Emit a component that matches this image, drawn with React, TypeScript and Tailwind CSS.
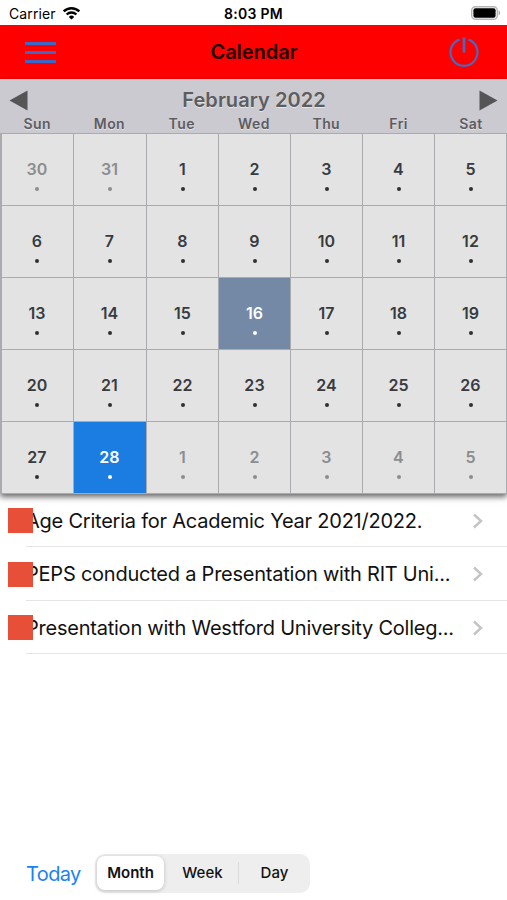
import clsx from 'clsx'

const weekdays = ['Sun', 'Mon', 'Tue', 'Wed', 'Thu', 'Fri', 'Sat']

// the visible month starts on Sunday, January 30
const days = [
  30, 31, 1, 2, 3, 4, 5,
  6, 7, 8, 9, 10, 11, 12,
  13, 14, 15, 16, 17, 18, 19,
  20, 21, 22, 23, 24, 25, 26,
  27, 28, 1, 2, 3, 4, 5,
]

const TODAY_INDEX = 17
const SELECTED_INDEX = 29

const events = [
  'Age Criteria for Academic Year 2021/2022.',
  'PEPS conducted a Presentation with RIT Uni...',
  'Presentation with Westford University Colleg...',
]

function StatusBar() {
  return (
    <div className="grid h-[25px] grid-cols-3 items-center bg-white pt-[3px] text-black">
      <div className="flex items-center gap-[6px] pl-[9px]">
        <span className="text-[14px] leading-none tracking-[0.1px]">Carrier</span>
        <svg width="19" height="14" viewBox="0 0 18 14" className="-mt-[3px]">
          <path d="M1.2 5.4a11.2 11.2 0 0 1 15.6 0" fill="none" stroke="#000" strokeWidth="2.5" />
          <path d="M4.1 8.5a7 7 0 0 1 9.8 0" fill="none" stroke="#000" strokeWidth="2.3" />
          <path d="M9 13.6 6.3 10.9a3.9 3.9 0 0 1 5.4 0z" fill="#000" />
        </svg>
      </div>
      <div className="text-center text-[14px] leading-none font-semibold tracking-[0.3px]">8:03 PM</div>
      <div className="flex justify-end pr-[6px]">
        <svg width="30" height="14" viewBox="0 0 30 14" className="-mt-[3px]">
          <rect x="0.7" y="0.7" width="25.6" height="12.6" rx="3.8" fill="#fff" stroke="#b5b5b5" strokeWidth="1.4" />
          <rect x="2.4" y="2.2" width="22.2" height="9.6" rx="2" fill="#000" />
          <path d="M27.6 4.6c2 .5 2 4.3 0 4.8z" fill="#aaa" />
        </svg>
      </div>
    </div>
  )
}

function NavBar() {
  return (
    <div className="flex h-[54px] items-center justify-between bg-[#ff0000] pr-[27px] pl-[25px]">
      <button className="flex w-[31px] flex-col gap-[6px]">
        <span className="h-[3px] bg-[#3b68c9]" />
        <span className="h-[3px] bg-[#3b68c9]" />
        <span className="h-[3px] bg-[#3b68c9]" />
      </button>
      <h1 className="pl-[4px] text-[20px] font-semibold tracking-[-0.05px] text-[#1a0000]">Calendar</h1>
      <button>
        <svg width="32" height="32" viewBox="0 0 32 32" fill="none" stroke="#4a68bd" strokeWidth="2.2" className="block">
          <path d="M11.4 3.6a13.500 13.500 0 1 0 9.200 0" />
          <path d="M16 1.500v15" strokeWidth="2.800" />
        </svg>
      </button>
    </div>
  )
}

function MonthHeader() {
  return (
    <div className="h-[54px] bg-[#cbcad0] text-[#5d5c61] [text-shadow:0_1px_0_#fff8]">
      <div className="flex h-[35px] items-center justify-between px-[9px] pt-[7px]">
        <svg width="19" height="21" viewBox="0 0 19 21"><path d="M.5 10.500 18.500.5v20z" fill="#555457" /></svg>
        <span className="pl-px text-[20px] leading-none font-semibold tracking-[0.05px]">February 2022</span>
        <svg width="19" height="21" viewBox="0 0 19 21"><path d="M18.500 10.500.5.5v20z" fill="#555457" /></svg>
      </div>
      <div className="grid grid-cols-7 pl-[1px] text-center text-[14px] leading-[19px] font-semibold tracking-[0.4px]">
        {weekdays.map((day) => (
          <span key={day}>{day}</span>
        ))}
      </div>
    </div>
  )
}

function DayCell({ day, index }: { day: number; index: number }) {
  const outside = index < 2 || index > 29
  const today = index === TODAY_INDEX
  const selected = index === SELECTED_INDEX

  return (
    <div
      className={clsx(
        'flex flex-col items-center border-t border-l border-[#a9abaf] pt-[25px]',
        index % 7 < 2 && 'pr-px',
        outside && 'bg-[#e3e3e3] text-[#8b8d8f]',
        today && 'bg-[#7389a6] text-white',
        selected && 'border-[#1a6cc4] bg-[#1b7de2] text-white',
        !outside && !today && !selected && 'bg-[#e3e3e3] text-[#373b40]',
      )}
    >
      <span className="text-[16px] leading-[20px] font-semibold tracking-[0.1px]">{day}</span>
      <span
        className={clsx(
          'mt-[8px] h-1 w-1 rounded-full',
          today || selected ? 'bg-white' : outside ? 'bg-[#8b8d8f]' : 'bg-[#2c2f33]',
        )}
      />
    </div>
  )
}

function EventRow({ title }: { title: string }) {
  return (
    <div className="relative flex h-[53.7px] pl-[26px]">
      <div className="flex flex-1 items-center justify-between border-b border-[#e5e5e5] pt-[2px] pr-[24px]">
        <span className="text-[20px] leading-none tracking-[-0.23px] whitespace-nowrap text-[#111]">{title}</span>
        <svg width="11" height="16" viewBox="0 0 11 16" fill="none" stroke="#c4c4c6" strokeWidth="2.4">
          <path d="m2 1.500 7 6.500-7 6.500" />
        </svg>
      </div>
      {/* the category marker overlaps the start of the title */}
      <span className="absolute top-[14.5px] left-[8px] h-[25px] w-[25px] bg-[#e84f38]" />
    </div>
  )
}

function Toolbar() {
  return (
    <div className="flex h-[54px] items-center pl-[26px]">
      <button className="w-[69px] pt-px text-left text-[20px] leading-none tracking-[-0.6px] text-[#1a82f7]">Today</button>
      <div className="flex h-[39px] w-[215px] items-center rounded-[10px] bg-[#eeeeef] p-[2px] text-[15px] font-medium text-[#111]">
        <span className="flex h-[34px] w-[67px] items-center justify-center rounded-[8px] bg-white pt-px font-semibold shadow-[0_1px_4px_#0003]">
          Month
        </span>
        <span className="flex-1 pt-px pl-[3px] text-center tracking-[0.1px]">Week</span>
        <span className="h-[22px] w-px bg-[#dcdcde]" />
        <span className="w-[69px] pt-px pl-[2px] text-center tracking-[0.1px]">Day</span>
      </div>
    </div>
  )
}

export default function App() {
  return (
    <div className="flex h-[900px] w-[507px] flex-col overflow-hidden bg-white font-['Inter',sans-serif]">
      <StatusBar />
      <NavBar />
      <div className="relative z-10 shadow-[0_3px_6px_#0009]">
        <MonthHeader />
        <div className="grid auto-rows-[72px] grid-cols-[72px_73px_72px_72px_72px_72px_72px] border-r border-b border-l border-[#a9abaf]">
          {days.map((day, i) => (
            <DayCell key={i} day={day} index={i} />
          ))}
        </div>
      </div>
      <div className="-mt-[0.6px] flex-1">
        {events.map((title) => (
          <EventRow key={title} title={title} />
        ))}
      </div>
      <Toolbar />
    </div>
  )
}
